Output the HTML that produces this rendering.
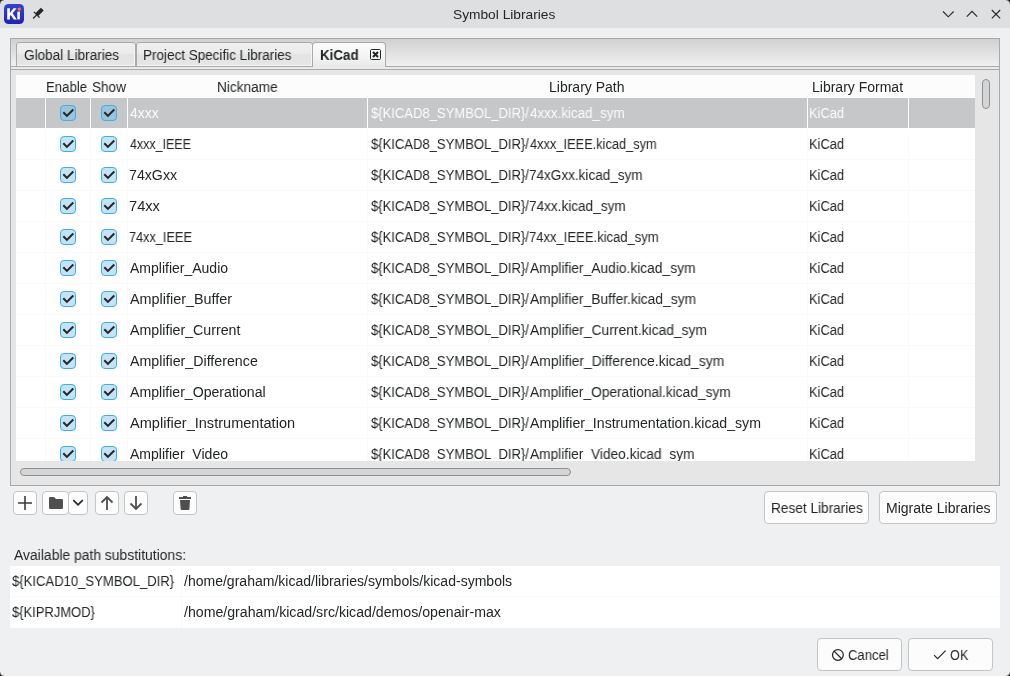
<!DOCTYPE html><html><head><meta charset="utf-8"><title>Symbol Libraries</title><style>
*{box-sizing:border-box}
html,body{margin:0;padding:0}
body{width:1010px;height:676px;position:relative;overflow:hidden;background:#eff0f1;font-family:"Liberation Sans",sans-serif;color:#232627;font-size:14px}
.a{position:absolute}
.t{position:absolute;white-space:pre;line-height:16px;height:16px;transform-origin:0 0;will-change:transform}
.btn{position:absolute;background:#fcfcfc;border:1px solid #c3c4c5;border-radius:4px}
</style></head><body>
<div class="a" style="left:0;top:0;width:1010px;height:28px;background:#dedfe0"></div>
<svg class="a" style="left:4px;top:4px" width="20" height="20" viewBox="0 0 20 20"><defs><linearGradient id="kg" x1="0" y1="0" x2="0" y2="1"><stop offset="0" stop-color="#3343d0"/><stop offset="1" stop-color="#1f22b8"/></linearGradient></defs><rect x="0" y="0" width="20" height="20" rx="4.5" fill="url(#kg)"/><path d="M3.2 4.3h2.7v4.6l3.6-4.6h3.1l-4 4.9 4.3 6.2h-3.2l-2.9-4.4-0.9 1v3.4h-2.7z" fill="#fafafa"/><rect x="13.3" y="7.6" width="2.6" height="7.8" fill="#fafafa"/><circle cx="15.3" cy="5.2" r="1.6" fill="#ff7a12"/></svg>
<svg class="a" style="left:31px;top:6px" width="14" height="14" viewBox="0 0 14 14"><path d="M12.7 4.5 L9.9 1.7 L4.4 7.3 L7.2 10.1 Z" fill="#232627"/><path d="M2.9 5.9 L8.6 11.6" stroke="#232627" stroke-width="1.3"/><path d="M2.1 12.5 L5.6 9.0" stroke="#232627" stroke-width="1.2"/></svg>
<div class="t" style="left:453.44px;top:7px;color:#232627;font-size:13px;transform:scaleX(1.0568)">Symbol Libraries</div>
<svg class="a" style="left:938px;top:6px" width="68" height="16" viewBox="0 0 68 16"><path d="M5 5.5 L10.3 10.8 L15.6 5.5" fill="none" stroke="#232627" stroke-width="1.1"/><path d="M28.8 10.6 L34 5.3 L39.2 10.6" fill="none" stroke="#232627" stroke-width="1.1"/><path d="M53.8 4 L62.2 12.4 M62.2 4 L53.8 12.4" fill="none" stroke="#232627" stroke-width="1.1"/></svg>
<div class="a" style="left:10px;top:38px;width:990px;height:448px;border:1px solid #a9a9a9;background:#e6e6e6"></div>
<div class="a" style="left:11px;top:39px;width:988px;height:27px;background:linear-gradient(#d1d1d1,#f0f0f0)"></div>
<div class="a" style="left:11px;top:66px;width:988px;height:1px;background:#a9a9a9"></div>
<div class="a" style="left:16px;top:42px;width:120px;height:25px;border:1px solid #a9a9a9;border-radius:3px 3px 0 0;background:linear-gradient(#efefef 0,#ebebeb 50%,#e3e3e3 50%,#e6e6e6 100%);box-shadow:inset -1px -1px 0 #f6f6f6"></div>
<div class="t" style="left:23.78px;top:47px;color:#232627;transform:scaleX(0.9696)">Global Libraries</div>
<div class="a" style="left:136px;top:42px;width:177px;height:25px;border:1px solid #a9a9a9;border-radius:3px 3px 0 0;background:linear-gradient(#efefef 0,#ebebeb 50%,#e3e3e3 50%,#e6e6e6 100%);box-shadow:inset -1px -1px 0 #f6f6f6"></div>
<div class="t" style="left:142.64px;top:47px;color:#232627;transform:scaleX(0.9634)">Project Specific Libraries</div>
<div class="a" style="left:312px;top:42px;width:74px;height:25px;border:1px solid #a9a9a9;border-bottom:none;border-radius:4px 4px 0 0;background:linear-gradient(#fbfbfb,#f4f4f4 55%,#e9e9e9)"></div>
<div class="a" style="left:11px;top:67px;width:988px;height:2px;background:#ebebeb"></div>
<div class="a" style="left:11px;top:69px;width:988px;height:1px;background:#a9a9a9"></div>
<div class="t" style="left:319.75px;top:47px;color:#232627;font-weight:bold;transform:scaleX(0.9538)">KiCad</div>
<svg class="a" style="left:370px;top:49px" width="11" height="11" viewBox="0 0 11 11"><rect x="0.5" y="0.5" width="10" height="10" rx="1" fill="none" stroke="#232627"/><path d="M3 3 L8 8 M8 3 L3 8" stroke="#232627" stroke-width="2"/></svg>
<div class="a" style="left:16px;top:75px;width:959px;height:386px;background:#ffffff;overflow:hidden">
<div class="a" style="left:0;top:0;width:959px;height:23px;background:#fcfcfc"></div>
<div class="t" style="left:30.46px;top:4px;color:#232627;transform:scaleX(0.9429)">Enable</div>
<div class="t" style="left:75.53px;top:4px;color:#232627;transform:scaleX(0.9676)">Show</div>
<div class="t" style="left:200.73px;top:4px;color:#232627;transform:scaleX(0.9738)">Nickname</div>
<div class="t" style="left:533.00px;top:4px;color:#232627;transform:scaleX(0.9973)">Library Path</div>
<div class="t" style="left:795.60px;top:4px;color:#232627;transform:scaleX(1.0000)">Library Format</div>
<div class="a" style="left:0;top:23px;width:959px;height:30px;background:#c6c7c9"></div>
<div class="a" style="left:0;top:53px;width:959px;height:1px;background:#ffffff"></div>
<div class="a" style="left:29px;top:23px;width:1px;height:30px;background:#ffffff"></div>
<div class="a" style="left:74px;top:23px;width:1px;height:30px;background:#ffffff"></div>
<div class="a" style="left:111px;top:23px;width:1px;height:30px;background:#ffffff"></div>
<div class="a" style="left:351px;top:23px;width:1px;height:30px;background:#ffffff"></div>
<div class="a" style="left:791px;top:23px;width:1px;height:30px;background:#ffffff"></div>
<div class="a" style="left:892px;top:23px;width:1px;height:30px;background:#ffffff"></div>
<svg class="a" style="left:44px;top:30px" width="16" height="16" viewBox="0 0 16 16"><rect x="0.5" y="0.5" width="15" height="15" rx="3.5" fill="#9bc3d9" stroke="#3daee9"/><path d="M3.3 7.3 L6.9 10.9 L13.3 4.5" fill="none" stroke="#232627" stroke-width="2"/></svg>
<svg class="a" style="left:85px;top:30px" width="16" height="16" viewBox="0 0 16 16"><rect x="0.5" y="0.5" width="15" height="15" rx="3.5" fill="#9bc3d9" stroke="#3daee9"/><path d="M3.3 7.3 L6.9 10.9 L13.3 4.5" fill="none" stroke="#232627" stroke-width="2"/></svg>
<div class="t" style="left:114.30px;top:30px;color:#fcfcfc;transform:scaleX(0.9828)">4xxx</div>
<div class="t" style="left:354.60px;top:30px;color:#fcfcfc;transform:scaleX(0.9306)">${KICAD8_SYMBOL_DIR}/</div>
<div class="t" style="left:513.60px;top:30px;color:#fcfcfc;transform:scaleX(0.9571)">4xxx.kicad_sym</div>
<div class="t" style="left:793.48px;top:30px;color:#fcfcfc;transform:scaleX(0.9222)">KiCad</div>
<div class="a" style="left:0;top:84px;width:959px;height:1px;background:#fafafa"></div>
<div class="a" style="left:29px;top:54px;width:1px;height:30px;background:#fafafa"></div>
<div class="a" style="left:74px;top:54px;width:1px;height:30px;background:#fafafa"></div>
<div class="a" style="left:111px;top:54px;width:1px;height:30px;background:#fafafa"></div>
<div class="a" style="left:351px;top:54px;width:1px;height:30px;background:#fafafa"></div>
<div class="a" style="left:791px;top:54px;width:1px;height:30px;background:#fafafa"></div>
<div class="a" style="left:892px;top:54px;width:1px;height:30px;background:#fafafa"></div>
<svg class="a" style="left:44px;top:61px" width="16" height="16" viewBox="0 0 16 16"><rect x="0.5" y="0.5" width="15" height="15" rx="3.5" fill="#c4e4f6" stroke="#3daee9"/><path d="M3.3 7.3 L6.9 10.9 L13.3 4.5" fill="none" stroke="#232627" stroke-width="2"/></svg>
<svg class="a" style="left:85px;top:61px" width="16" height="16" viewBox="0 0 16 16"><rect x="0.5" y="0.5" width="15" height="15" rx="3.5" fill="#c4e4f6" stroke="#3daee9"/><path d="M3.3 7.3 L6.9 10.9 L13.3 4.5" fill="none" stroke="#232627" stroke-width="2"/></svg>
<div class="t" style="left:114.30px;top:61px;color:#232627;transform:scaleX(0.8897)">4xxx_IEEE</div>
<div class="t" style="left:354.60px;top:61px;color:#232627;transform:scaleX(0.9306)">${KICAD8_SYMBOL_DIR}/</div>
<div class="t" style="left:513.60px;top:61px;color:#232627;transform:scaleX(0.9152)">4xxx_IEEE.kicad_sym</div>
<div class="t" style="left:793.48px;top:61px;color:#232627;transform:scaleX(0.9222)">KiCad</div>
<div class="a" style="left:0;top:115px;width:959px;height:1px;background:#fafafa"></div>
<div class="a" style="left:29px;top:85px;width:1px;height:30px;background:#fafafa"></div>
<div class="a" style="left:74px;top:85px;width:1px;height:30px;background:#fafafa"></div>
<div class="a" style="left:111px;top:85px;width:1px;height:30px;background:#fafafa"></div>
<div class="a" style="left:351px;top:85px;width:1px;height:30px;background:#fafafa"></div>
<div class="a" style="left:791px;top:85px;width:1px;height:30px;background:#fafafa"></div>
<div class="a" style="left:892px;top:85px;width:1px;height:30px;background:#fafafa"></div>
<svg class="a" style="left:44px;top:92px" width="16" height="16" viewBox="0 0 16 16"><rect x="0.5" y="0.5" width="15" height="15" rx="3.5" fill="#c4e4f6" stroke="#3daee9"/><path d="M3.3 7.3 L6.9 10.9 L13.3 4.5" fill="none" stroke="#232627" stroke-width="2"/></svg>
<svg class="a" style="left:85px;top:92px" width="16" height="16" viewBox="0 0 16 16"><rect x="0.5" y="0.5" width="15" height="15" rx="3.5" fill="#c4e4f6" stroke="#3daee9"/><path d="M3.3 7.3 L6.9 10.9 L13.3 4.5" fill="none" stroke="#232627" stroke-width="2"/></svg>
<div class="t" style="left:113.29px;top:92px;color:#232627;transform:scaleX(1.0130)">74xGxx</div>
<div class="t" style="left:354.60px;top:92px;color:#232627;transform:scaleX(0.9306)">${KICAD8_SYMBOL_DIR}/</div>
<div class="t" style="left:512.63px;top:92px;color:#232627;transform:scaleX(0.9672)">74xGxx.kicad_sym</div>
<div class="t" style="left:793.48px;top:92px;color:#232627;transform:scaleX(0.9222)">KiCad</div>
<div class="a" style="left:0;top:146px;width:959px;height:1px;background:#fafafa"></div>
<div class="a" style="left:29px;top:116px;width:1px;height:30px;background:#fafafa"></div>
<div class="a" style="left:74px;top:116px;width:1px;height:30px;background:#fafafa"></div>
<div class="a" style="left:111px;top:116px;width:1px;height:30px;background:#fafafa"></div>
<div class="a" style="left:351px;top:116px;width:1px;height:30px;background:#fafafa"></div>
<div class="a" style="left:791px;top:116px;width:1px;height:30px;background:#fafafa"></div>
<div class="a" style="left:892px;top:116px;width:1px;height:30px;background:#fafafa"></div>
<svg class="a" style="left:44px;top:123px" width="16" height="16" viewBox="0 0 16 16"><rect x="0.5" y="0.5" width="15" height="15" rx="3.5" fill="#c4e4f6" stroke="#3daee9"/><path d="M3.3 7.3 L6.9 10.9 L13.3 4.5" fill="none" stroke="#232627" stroke-width="2"/></svg>
<svg class="a" style="left:85px;top:123px" width="16" height="16" viewBox="0 0 16 16"><rect x="0.5" y="0.5" width="15" height="15" rx="3.5" fill="#c4e4f6" stroke="#3daee9"/><path d="M3.3 7.3 L6.9 10.9 L13.3 4.5" fill="none" stroke="#232627" stroke-width="2"/></svg>
<div class="t" style="left:113.25px;top:123px;color:#232627;transform:scaleX(1.0464)">74xx</div>
<div class="t" style="left:354.60px;top:123px;color:#232627;transform:scaleX(0.9306)">${KICAD8_SYMBOL_DIR}/</div>
<div class="t" style="left:512.63px;top:123px;color:#232627;transform:scaleX(0.9704)">74xx.kicad_sym</div>
<div class="t" style="left:793.48px;top:123px;color:#232627;transform:scaleX(0.9222)">KiCad</div>
<div class="a" style="left:0;top:177px;width:959px;height:1px;background:#fafafa"></div>
<div class="a" style="left:29px;top:147px;width:1px;height:30px;background:#fafafa"></div>
<div class="a" style="left:74px;top:147px;width:1px;height:30px;background:#fafafa"></div>
<div class="a" style="left:111px;top:147px;width:1px;height:30px;background:#fafafa"></div>
<div class="a" style="left:351px;top:147px;width:1px;height:30px;background:#fafafa"></div>
<div class="a" style="left:791px;top:147px;width:1px;height:30px;background:#fafafa"></div>
<div class="a" style="left:892px;top:147px;width:1px;height:30px;background:#fafafa"></div>
<svg class="a" style="left:44px;top:154px" width="16" height="16" viewBox="0 0 16 16"><rect x="0.5" y="0.5" width="15" height="15" rx="3.5" fill="#c4e4f6" stroke="#3daee9"/><path d="M3.3 7.3 L6.9 10.9 L13.3 4.5" fill="none" stroke="#232627" stroke-width="2"/></svg>
<svg class="a" style="left:85px;top:154px" width="16" height="16" viewBox="0 0 16 16"><rect x="0.5" y="0.5" width="15" height="15" rx="3.5" fill="#c4e4f6" stroke="#3daee9"/><path d="M3.3 7.3 L6.9 10.9 L13.3 4.5" fill="none" stroke="#232627" stroke-width="2"/></svg>
<div class="t" style="left:113.39px;top:154px;color:#232627;transform:scaleX(0.9088)">74xx_IEEE</div>
<div class="t" style="left:354.60px;top:154px;color:#232627;transform:scaleX(0.9306)">${KICAD8_SYMBOL_DIR}/</div>
<div class="t" style="left:512.67px;top:154px;color:#232627;transform:scaleX(0.9314)">74xx_IEEE.kicad_sym</div>
<div class="t" style="left:793.48px;top:154px;color:#232627;transform:scaleX(0.9222)">KiCad</div>
<div class="a" style="left:0;top:208px;width:959px;height:1px;background:#fafafa"></div>
<div class="a" style="left:29px;top:178px;width:1px;height:30px;background:#fafafa"></div>
<div class="a" style="left:74px;top:178px;width:1px;height:30px;background:#fafafa"></div>
<div class="a" style="left:111px;top:178px;width:1px;height:30px;background:#fafafa"></div>
<div class="a" style="left:351px;top:178px;width:1px;height:30px;background:#fafafa"></div>
<div class="a" style="left:791px;top:178px;width:1px;height:30px;background:#fafafa"></div>
<div class="a" style="left:892px;top:178px;width:1px;height:30px;background:#fafafa"></div>
<svg class="a" style="left:44px;top:185px" width="16" height="16" viewBox="0 0 16 16"><rect x="0.5" y="0.5" width="15" height="15" rx="3.5" fill="#c4e4f6" stroke="#3daee9"/><path d="M3.3 7.3 L6.9 10.9 L13.3 4.5" fill="none" stroke="#232627" stroke-width="2"/></svg>
<svg class="a" style="left:85px;top:185px" width="16" height="16" viewBox="0 0 16 16"><rect x="0.5" y="0.5" width="15" height="15" rx="3.5" fill="#c4e4f6" stroke="#3daee9"/><path d="M3.3 7.3 L6.9 10.9 L13.3 4.5" fill="none" stroke="#232627" stroke-width="2"/></svg>
<div class="t" style="left:114.30px;top:185px;color:#232627;transform:scaleX(1.0000)">Amplifier_Audio</div>
<div class="t" style="left:354.60px;top:185px;color:#232627;transform:scaleX(0.9306)">${KICAD8_SYMBOL_DIR}/</div>
<div class="t" style="left:513.60px;top:185px;color:#232627;transform:scaleX(0.9844)">Amplifier_Audio.kicad_sym</div>
<div class="t" style="left:793.48px;top:185px;color:#232627;transform:scaleX(0.9222)">KiCad</div>
<div class="a" style="left:0;top:239px;width:959px;height:1px;background:#fafafa"></div>
<div class="a" style="left:29px;top:209px;width:1px;height:30px;background:#fafafa"></div>
<div class="a" style="left:74px;top:209px;width:1px;height:30px;background:#fafafa"></div>
<div class="a" style="left:111px;top:209px;width:1px;height:30px;background:#fafafa"></div>
<div class="a" style="left:351px;top:209px;width:1px;height:30px;background:#fafafa"></div>
<div class="a" style="left:791px;top:209px;width:1px;height:30px;background:#fafafa"></div>
<div class="a" style="left:892px;top:209px;width:1px;height:30px;background:#fafafa"></div>
<svg class="a" style="left:44px;top:216px" width="16" height="16" viewBox="0 0 16 16"><rect x="0.5" y="0.5" width="15" height="15" rx="3.5" fill="#c4e4f6" stroke="#3daee9"/><path d="M3.3 7.3 L6.9 10.9 L13.3 4.5" fill="none" stroke="#232627" stroke-width="2"/></svg>
<svg class="a" style="left:85px;top:216px" width="16" height="16" viewBox="0 0 16 16"><rect x="0.5" y="0.5" width="15" height="15" rx="3.5" fill="#c4e4f6" stroke="#3daee9"/><path d="M3.3 7.3 L6.9 10.9 L13.3 4.5" fill="none" stroke="#232627" stroke-width="2"/></svg>
<div class="t" style="left:114.30px;top:216px;color:#232627;transform:scaleX(1.0273)">Amplifier_Buffer</div>
<div class="t" style="left:354.60px;top:216px;color:#232627;transform:scaleX(0.9306)">${KICAD8_SYMBOL_DIR}/</div>
<div class="t" style="left:513.60px;top:216px;color:#232627;transform:scaleX(0.9845)">Amplifier_Buffer.kicad_sym</div>
<div class="t" style="left:793.48px;top:216px;color:#232627;transform:scaleX(0.9222)">KiCad</div>
<div class="a" style="left:0;top:270px;width:959px;height:1px;background:#fafafa"></div>
<div class="a" style="left:29px;top:240px;width:1px;height:30px;background:#fafafa"></div>
<div class="a" style="left:74px;top:240px;width:1px;height:30px;background:#fafafa"></div>
<div class="a" style="left:111px;top:240px;width:1px;height:30px;background:#fafafa"></div>
<div class="a" style="left:351px;top:240px;width:1px;height:30px;background:#fafafa"></div>
<div class="a" style="left:791px;top:240px;width:1px;height:30px;background:#fafafa"></div>
<div class="a" style="left:892px;top:240px;width:1px;height:30px;background:#fafafa"></div>
<svg class="a" style="left:44px;top:247px" width="16" height="16" viewBox="0 0 16 16"><rect x="0.5" y="0.5" width="15" height="15" rx="3.5" fill="#c4e4f6" stroke="#3daee9"/><path d="M3.3 7.3 L6.9 10.9 L13.3 4.5" fill="none" stroke="#232627" stroke-width="2"/></svg>
<svg class="a" style="left:85px;top:247px" width="16" height="16" viewBox="0 0 16 16"><rect x="0.5" y="0.5" width="15" height="15" rx="3.5" fill="#c4e4f6" stroke="#3daee9"/><path d="M3.3 7.3 L6.9 10.9 L13.3 4.5" fill="none" stroke="#232627" stroke-width="2"/></svg>
<div class="t" style="left:114.30px;top:247px;color:#232627;transform:scaleX(1.0138)">Amplifier_Current</div>
<div class="t" style="left:354.60px;top:247px;color:#232627;transform:scaleX(0.9306)">${KICAD8_SYMBOL_DIR}/</div>
<div class="t" style="left:513.60px;top:247px;color:#232627;transform:scaleX(0.9893)">Amplifier_Current.kicad_sym</div>
<div class="t" style="left:793.48px;top:247px;color:#232627;transform:scaleX(0.9222)">KiCad</div>
<div class="a" style="left:0;top:301px;width:959px;height:1px;background:#fafafa"></div>
<div class="a" style="left:29px;top:271px;width:1px;height:30px;background:#fafafa"></div>
<div class="a" style="left:74px;top:271px;width:1px;height:30px;background:#fafafa"></div>
<div class="a" style="left:111px;top:271px;width:1px;height:30px;background:#fafafa"></div>
<div class="a" style="left:351px;top:271px;width:1px;height:30px;background:#fafafa"></div>
<div class="a" style="left:791px;top:271px;width:1px;height:30px;background:#fafafa"></div>
<div class="a" style="left:892px;top:271px;width:1px;height:30px;background:#fafafa"></div>
<svg class="a" style="left:44px;top:278px" width="16" height="16" viewBox="0 0 16 16"><rect x="0.5" y="0.5" width="15" height="15" rx="3.5" fill="#c4e4f6" stroke="#3daee9"/><path d="M3.3 7.3 L6.9 10.9 L13.3 4.5" fill="none" stroke="#232627" stroke-width="2"/></svg>
<svg class="a" style="left:85px;top:278px" width="16" height="16" viewBox="0 0 16 16"><rect x="0.5" y="0.5" width="15" height="15" rx="3.5" fill="#c4e4f6" stroke="#3daee9"/><path d="M3.3 7.3 L6.9 10.9 L13.3 4.5" fill="none" stroke="#232627" stroke-width="2"/></svg>
<div class="t" style="left:114.30px;top:278px;color:#232627;transform:scaleX(1.0160)">Amplifier_Difference</div>
<div class="t" style="left:354.60px;top:278px;color:#232627;transform:scaleX(0.9306)">${KICAD8_SYMBOL_DIR}/</div>
<div class="t" style="left:513.60px;top:278px;color:#232627;transform:scaleX(0.9918)">Amplifier_Difference.kicad_sym</div>
<div class="t" style="left:793.48px;top:278px;color:#232627;transform:scaleX(0.9222)">KiCad</div>
<div class="a" style="left:0;top:332px;width:959px;height:1px;background:#fafafa"></div>
<div class="a" style="left:29px;top:302px;width:1px;height:30px;background:#fafafa"></div>
<div class="a" style="left:74px;top:302px;width:1px;height:30px;background:#fafafa"></div>
<div class="a" style="left:111px;top:302px;width:1px;height:30px;background:#fafafa"></div>
<div class="a" style="left:351px;top:302px;width:1px;height:30px;background:#fafafa"></div>
<div class="a" style="left:791px;top:302px;width:1px;height:30px;background:#fafafa"></div>
<div class="a" style="left:892px;top:302px;width:1px;height:30px;background:#fafafa"></div>
<svg class="a" style="left:44px;top:309px" width="16" height="16" viewBox="0 0 16 16"><rect x="0.5" y="0.5" width="15" height="15" rx="3.5" fill="#c4e4f6" stroke="#3daee9"/><path d="M3.3 7.3 L6.9 10.9 L13.3 4.5" fill="none" stroke="#232627" stroke-width="2"/></svg>
<svg class="a" style="left:85px;top:309px" width="16" height="16" viewBox="0 0 16 16"><rect x="0.5" y="0.5" width="15" height="15" rx="3.5" fill="#c4e4f6" stroke="#3daee9"/><path d="M3.3 7.3 L6.9 10.9 L13.3 4.5" fill="none" stroke="#232627" stroke-width="2"/></svg>
<div class="t" style="left:114.30px;top:309px;color:#232627;transform:scaleX(1.0075)">Amplifier_Operational</div>
<div class="t" style="left:354.60px;top:309px;color:#232627;transform:scaleX(0.9306)">${KICAD8_SYMBOL_DIR}/</div>
<div class="t" style="left:513.60px;top:309px;color:#232627;transform:scaleX(0.9809)">Amplifier_Operational.kicad_sym</div>
<div class="t" style="left:793.48px;top:309px;color:#232627;transform:scaleX(0.9222)">KiCad</div>
<div class="a" style="left:0;top:363px;width:959px;height:1px;background:#fafafa"></div>
<div class="a" style="left:29px;top:333px;width:1px;height:30px;background:#fafafa"></div>
<div class="a" style="left:74px;top:333px;width:1px;height:30px;background:#fafafa"></div>
<div class="a" style="left:111px;top:333px;width:1px;height:30px;background:#fafafa"></div>
<div class="a" style="left:351px;top:333px;width:1px;height:30px;background:#fafafa"></div>
<div class="a" style="left:791px;top:333px;width:1px;height:30px;background:#fafafa"></div>
<div class="a" style="left:892px;top:333px;width:1px;height:30px;background:#fafafa"></div>
<svg class="a" style="left:44px;top:340px" width="16" height="16" viewBox="0 0 16 16"><rect x="0.5" y="0.5" width="15" height="15" rx="3.5" fill="#c4e4f6" stroke="#3daee9"/><path d="M3.3 7.3 L6.9 10.9 L13.3 4.5" fill="none" stroke="#232627" stroke-width="2"/></svg>
<svg class="a" style="left:85px;top:340px" width="16" height="16" viewBox="0 0 16 16"><rect x="0.5" y="0.5" width="15" height="15" rx="3.5" fill="#c4e4f6" stroke="#3daee9"/><path d="M3.3 7.3 L6.9 10.9 L13.3 4.5" fill="none" stroke="#232627" stroke-width="2"/></svg>
<div class="t" style="left:114.30px;top:340px;color:#232627;transform:scaleX(1.0399)">Amplifier_Instrumentation</div>
<div class="t" style="left:354.60px;top:340px;color:#232627;transform:scaleX(0.9306)">${KICAD8_SYMBOL_DIR}/</div>
<div class="t" style="left:513.60px;top:340px;color:#232627;transform:scaleX(1.0096)">Amplifier_Instrumentation.kicad_sym</div>
<div class="t" style="left:793.48px;top:340px;color:#232627;transform:scaleX(0.9222)">KiCad</div>
<div class="a" style="left:0;top:394px;width:959px;height:1px;background:#fafafa"></div>
<div class="a" style="left:29px;top:364px;width:1px;height:30px;background:#fafafa"></div>
<div class="a" style="left:74px;top:364px;width:1px;height:30px;background:#fafafa"></div>
<div class="a" style="left:111px;top:364px;width:1px;height:30px;background:#fafafa"></div>
<div class="a" style="left:351px;top:364px;width:1px;height:30px;background:#fafafa"></div>
<div class="a" style="left:791px;top:364px;width:1px;height:30px;background:#fafafa"></div>
<div class="a" style="left:892px;top:364px;width:1px;height:30px;background:#fafafa"></div>
<svg class="a" style="left:44px;top:371px" width="16" height="16" viewBox="0 0 16 16"><rect x="0.5" y="0.5" width="15" height="15" rx="3.5" fill="#c4e4f6" stroke="#3daee9"/><path d="M3.3 7.3 L6.9 10.9 L13.3 4.5" fill="none" stroke="#232627" stroke-width="2"/></svg>
<svg class="a" style="left:85px;top:371px" width="16" height="16" viewBox="0 0 16 16"><rect x="0.5" y="0.5" width="15" height="15" rx="3.5" fill="#c4e4f6" stroke="#3daee9"/><path d="M3.3 7.3 L6.9 10.9 L13.3 4.5" fill="none" stroke="#232627" stroke-width="2"/></svg>
<div class="t" style="left:114.30px;top:371px;color:#232627;transform:scaleX(1.0021)">Amplifier_Video</div>
<div class="t" style="left:354.60px;top:371px;color:#232627;transform:scaleX(0.9306)">${KICAD8_SYMBOL_DIR}/</div>
<div class="t" style="left:513.60px;top:371px;color:#232627;transform:scaleX(0.9796)">Amplifier_Video.kicad_sym</div>
<div class="t" style="left:793.48px;top:371px;color:#232627;transform:scaleX(0.9222)">KiCad</div>
</div>
<div class="a" style="left:982px;top:79px;width:8px;height:30px;border:1px solid #8f9091;border-radius:4px;background:#d4d5d7"></div>
<div class="a" style="left:20px;top:468px;width:551px;height:8px;border:1px solid #8f9091;border-radius:4px;background:#d4d5d7"></div>
<div class="btn" style="left:13px;top:491px;width:24px;height:24px"></div>
<svg class="a" style="left:17px;top:495px" width="16" height="16" viewBox="0 0 16 16"><path d="M8 1v14M1 8h14" stroke="#3b3b3b" stroke-width="1.6"/></svg>
<div class="btn" style="left:42px;top:491px;width:27px;height:24px"></div>
<div class="btn" style="left:68px;top:491px;width:20px;height:24px"></div>
<svg class="a" style="left:48px;top:496px" width="16" height="14" viewBox="0 0 16 14"><path d="M1 2.2 Q1 1 2.2 1 H6 L8 3 H13.8 Q15 3 15 4.2 V11.8 Q15 13 13.8 13 H2.2 Q1 13 1 11.8 Z" fill="#4f4f4f"/></svg>
<svg class="a" style="left:72px;top:498px" width="12" height="9" viewBox="0 0 12 9"><path d="M1.3 2.2 L6 6.9 L10.7 2.2" fill="none" stroke="#232627" stroke-width="1.7"/></svg>
<div class="btn" style="left:95px;top:491px;width:24px;height:24px"></div>
<svg class="a" style="left:99px;top:495px" width="16" height="16" viewBox="0 0 16 16"><path d="M8 15V2M2.5 7.5L8 2l5.5 5.5" fill="none" stroke="#4f4f4f" stroke-width="1.8"/></svg>
<div class="btn" style="left:124px;top:491px;width:24px;height:24px"></div>
<svg class="a" style="left:128px;top:495px" width="16" height="16" viewBox="0 0 16 16"><path d="M8 1v13M2.5 8.5L8 14l5.5-5.5" fill="none" stroke="#4f4f4f" stroke-width="1.8"/></svg>
<div class="btn" style="left:173px;top:491px;width:24px;height:24px"></div>
<svg class="a" style="left:177px;top:495px" width="16" height="16" viewBox="0 0 16 16"><path d="M2 2h12v2H2z M6 1h4v1.3H6z M3 5h10l-0.6 8.9q-0.1 1-1.1 1H4.7q-1 0-1.1-1z" fill="#4f4f4f"/></svg>
<div class="btn" style="left:764px;top:491px;width:105px;height:33px"></div>
<div class="t" style="left:770.53px;top:500px;color:#232627;transform:scaleX(0.9742)">Reset Libraries</div>
<div class="btn" style="left:879px;top:491px;width:118px;height:33px"></div>
<div class="t" style="left:885.60px;top:500px;color:#232627;transform:scaleX(1.0029)">Migrate Libraries</div>
<div class="t" style="left:13.50px;top:547px;color:#232627;transform:scaleX(0.9924)">Available path substitutions:</div>
<div class="a" style="left:10px;top:566px;width:990px;height:62px;background:#ffffff"></div>
<div class="a" style="left:10px;top:596px;width:990px;height:1px;background:#fafafa"></div>
<div class="a" style="left:181px;top:566px;width:1px;height:62px;background:#fafafa"></div>
<div class="t" style="left:12.30px;top:572.5px;color:#232627;transform:scaleX(0.9341)">${KICAD10_SYMBOL_DIR}</div>
<div class="t" style="left:184.20px;top:572.5px;color:#232627;transform:scaleX(1.0015)">/home/graham/kicad/libraries/symbols/kicad-symbols</div>
<div class="t" style="left:12.30px;top:604px;color:#232627;transform:scaleX(0.9258)">${KIPRJMOD}</div>
<div class="t" style="left:184.20px;top:604px;color:#232627;transform:scaleX(1.0105)">/home/graham/kicad/src/kicad/demos/openair-max</div>
<div class="btn" style="left:817px;top:638px;width:85px;height:33px"></div>
<svg class="a" style="left:831px;top:648px" width="14" height="14" viewBox="0 0 14 14"><circle cx="6.9" cy="6.9" r="5.4" fill="none" stroke="#232627" stroke-width="1.25"/><path d="M3.1 3.1L10.7 10.7" stroke="#232627" stroke-width="1.25"/></svg>
<div class="t" style="left:847.67px;top:647px;color:#232627;transform:scaleX(0.9333)">Cancel</div>
<div class="btn" style="left:908px;top:638px;width:85px;height:33px"></div>
<svg class="a" style="left:933px;top:649px" width="14" height="12" viewBox="0 0 14 12"><path d="M1.1 6.1L4.6 9.7 12.6 1.7" fill="none" stroke="#232627" stroke-width="1.15"/></svg>
<div class="t" style="left:949.69px;top:647px;color:#232627;transform:scaleX(0.9053)">OK</div>
<div class="a" style="left:0px;top:0px;width:4px;height:4px;background:radial-gradient(circle at 4px 4px,rgba(0,0,0,0) 3.2px,#1a1a1a 4.6px)"></div>
<div class="a" style="left:1006px;top:0px;width:4px;height:4px;background:radial-gradient(circle at 0px 4px,rgba(0,0,0,0) 3.2px,#1a1a1a 4.6px)"></div>
<div class="a" style="left:0px;top:672px;width:4px;height:4px;background:radial-gradient(circle at 4px 0px,rgba(0,0,0,0) 3.2px,#1a1a1a 4.6px)"></div>
<div class="a" style="left:1006px;top:672px;width:4px;height:4px;background:radial-gradient(circle at 0px 0px,rgba(0,0,0,0) 3.2px,#1a1a1a 4.6px)"></div>
</body></html>
